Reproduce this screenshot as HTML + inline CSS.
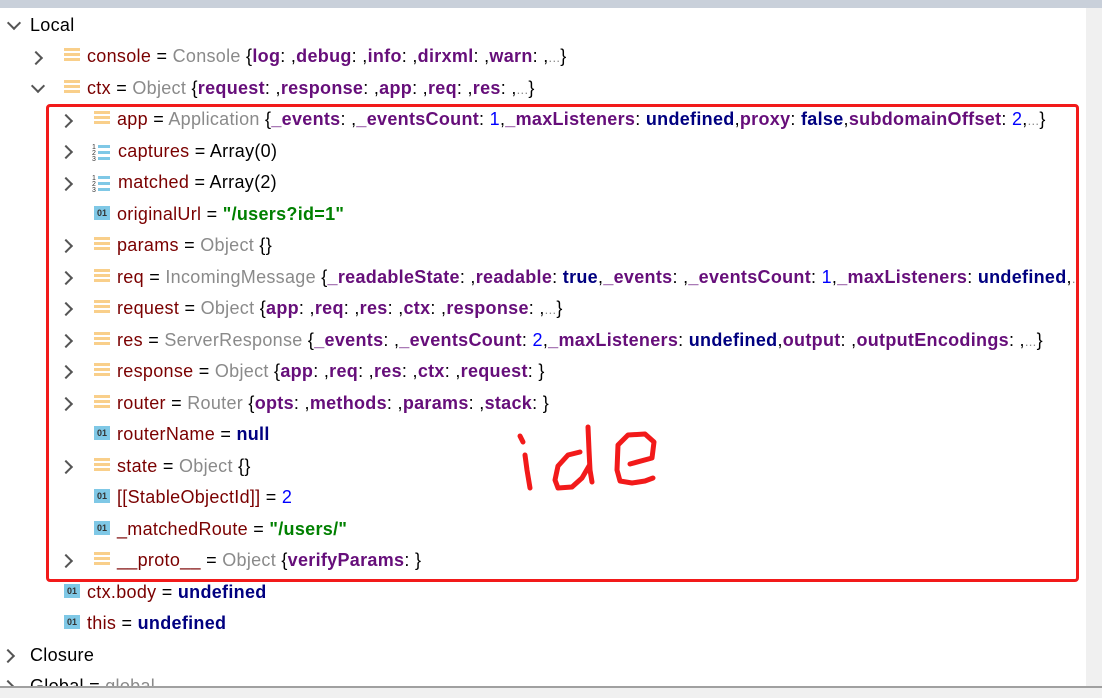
<!DOCTYPE html>
<html><head><meta charset="utf-8"><style>
html,body{margin:0;padding:0}
body{width:1102px;height:696px;overflow:hidden;background:#fff;position:relative;font-family:"Liberation Sans","Noto Sans CJK SC",sans-serif;font-size:18px;letter-spacing:0.3px}
.top{position:absolute;left:0;top:0;width:1102px;height:8px;background:#c9d0da}
.sb{position:absolute;right:0;top:8px;width:16px;height:679px;background:#f0f0f0}
.bot{position:absolute;left:0;top:686px;width:1102px;height:10px;background:#f0f0f0;border-top:2px solid #a0a0a0;z-index:5}
.r{position:absolute;height:31px;line-height:31px;white-space:nowrap;color:#000}
.ar{position:absolute;width:8px;height:8px;border-right:2.5px solid #555;border-bottom:2.5px solid #555}
.rt{transform:rotate(-45deg)}
.dn{transform:rotate(45deg)}
.n{color:#7a0000}.g{color:#8a8a8a}.k{color:#660e7a;font-weight:bold}.s{color:#008000;font-weight:bold}.b{color:#0000ff}.u{color:#000080;font-weight:bold}
.e{color:#8a8a8a;font-size:13px}
.ic{display:inline-block;vertical-align:middle;margin-right:7px;position:relative;top:-2px}
.obj{width:16px;height:15px;background:repeating-linear-gradient(#f9cf8a 0 3px,#fff 3px 5px)}
.arr{width:19px;height:19px;position:relative}
.prim{width:16px;height:14px;background:#7fc8e6;color:#333;font-size:9px;line-height:14px;text-align:center;font-weight:bold;letter-spacing:0}
.box{position:absolute;left:46px;top:104px;width:1027px;height:472px;border:3px solid #f21a1a;border-radius:4px;z-index:3}
.clip{position:absolute;left:0;top:0;width:1077px;height:696px;overflow:hidden}
</style></head><body>
<div class="top"></div>
<div class="sb"></div>
<div class="bot"></div>
<div class="box"></div>
<div class="clip">
<div class="ar dn" style="left:9px;top:18px"></div><div class="r" style="left:30px;top:10px">Local</div>

<div class="ar rt" style="left:31px;top:53px"></div><div class="r" style="left:64px;top:41px"><span class="ic obj"></span><span class="n">console</span> = <span class="g">Console</span> {<span class="k">log</span>: ,<span class="k">debug</span>: ,<span class="k">info</span>: ,<span class="k">dirxml</span>: ,<span class="k">warn</span>: ,<span class="e">...</span>}</div>

<div class="ar dn" style="left:33px;top:81px"></div><div class="r" style="left:64px;top:73px"><span class="ic obj"></span><span class="n">ctx</span> = <span class="g">Object</span> {<span class="k">request</span>: ,<span class="k">response</span>: ,<span class="k">app</span>: ,<span class="k">req</span>: ,<span class="k">res</span>: ,<span class="e">...</span>}</div>

<div class="ar rt" style="left:61px;top:116px"></div><div class="r" style="left:94px;top:104px"><span class="ic obj"></span><span class="n">app</span> = <span class="g">Application</span> {<span class="k">_events</span>: ,<span class="k">_eventsCount</span>: <span class="b">1</span>,<span class="k">_maxListeners</span>: <span class="u">undefined</span>,<span class="k">proxy</span>: <span class="u">false</span>,<span class="k">subdomainOffset</span>: <span class="b">2</span>,<span class="e">...</span>}</div>

<div class="ar rt" style="left:61px;top:147px"></div><div class="r" style="left:92px;top:136px"><span class="ic arr"><svg width="19" height="19"><text x="0" y="6" font-size="7" fill="#333">1</text><text x="0" y="12" font-size="7" fill="#333">2</text><text x="0" y="18" font-size="7" fill="#333">3</text><rect x="6" y="2" width="12" height="3" fill="#7fc8e6"/><rect x="6" y="8" width="12" height="3" fill="#7fc8e6"/><rect x="6" y="14" width="12" height="3" fill="#7fc8e6"/></svg></span><span class="n">captures</span> = Array(0)</div>

<div class="ar rt" style="left:61px;top:179px"></div><div class="r" style="left:92px;top:167px"><span class="ic arr"><svg width="19" height="19"><text x="0" y="6" font-size="7" fill="#333">1</text><text x="0" y="12" font-size="7" fill="#333">2</text><text x="0" y="18" font-size="7" fill="#333">3</text><rect x="6" y="2" width="12" height="3" fill="#7fc8e6"/><rect x="6" y="8" width="12" height="3" fill="#7fc8e6"/><rect x="6" y="14" width="12" height="3" fill="#7fc8e6"/></svg></span><span class="n">matched</span> = Array(2)</div>

<div class="r" style="left:94px;top:199px"><span class="ic prim">01</span><span class="n">originalUrl</span> = <span class="s">"/users?id=1"</span></div>

<div class="ar rt" style="left:61px;top:241px"></div><div class="r" style="left:94px;top:230px"><span class="ic obj"></span><span class="n">params</span> = <span class="g">Object</span> {}</div>

<div class="ar rt" style="left:61px;top:273px"></div><div class="r" style="left:94px;top:262px"><span class="ic obj"></span><span class="n">req</span> = <span class="g">IncomingMessage</span> {<span class="k">_readableState</span>: ,<span class="k">readable</span>: <span class="u">true</span>,<span class="k">_events</span>: ,<span class="k">_eventsCount</span>: <span class="b">1</span>,<span class="k">_maxListeners</span>: <span class="u">undefined</span>,<span class="e">...</span>}</div>

<div class="ar rt" style="left:61px;top:304px"></div><div class="r" style="left:94px;top:293px"><span class="ic obj"></span><span class="n">request</span> = <span class="g">Object</span> {<span class="k">app</span>: ,<span class="k">req</span>: ,<span class="k">res</span>: ,<span class="k">ctx</span>: ,<span class="k">response</span>: ,<span class="e">...</span>}</div>

<div class="ar rt" style="left:61px;top:336px"></div><div class="r" style="left:94px;top:325px"><span class="ic obj"></span><span class="n">res</span> = <span class="g">ServerResponse</span> {<span class="k">_events</span>: ,<span class="k">_eventsCount</span>: <span class="b">2</span>,<span class="k">_maxListeners</span>: <span class="u">undefined</span>,<span class="k">output</span>: ,<span class="k">outputEncodings</span>: ,<span class="e">...</span>}</div>

<div class="ar rt" style="left:61px;top:367px"></div><div class="r" style="left:94px;top:356px"><span class="ic obj"></span><span class="n">response</span> = <span class="g">Object</span> {<span class="k">app</span>: ,<span class="k">req</span>: ,<span class="k">res</span>: ,<span class="k">ctx</span>: ,<span class="k">request</span>: }</div>

<div class="ar rt" style="left:61px;top:399px"></div><div class="r" style="left:94px;top:388px"><span class="ic obj"></span><span class="n">router</span> = <span class="g">Router</span> {<span class="k">opts</span>: ,<span class="k">methods</span>: ,<span class="k">params</span>: ,<span class="k">stack</span>: }</div>

<div class="r" style="left:94px;top:419px"><span class="ic prim">01</span><span class="n">routerName</span> = <span class="u">null</span></div>

<div class="ar rt" style="left:61px;top:462px"></div><div class="r" style="left:94px;top:451px"><span class="ic obj"></span><span class="n">state</span> = <span class="g">Object</span> {}</div>

<div class="r" style="left:94px;top:482px"><span class="ic prim">01</span><span class="n">[[StableObjectId]]</span> = <span class="b">2</span></div>

<div class="r" style="left:94px;top:514px"><span class="ic prim">01</span><span class="n">_matchedRoute</span> = <span class="s">"/users/"</span></div>

<div class="ar rt" style="left:61px;top:556px"></div><div class="r" style="left:94px;top:545px"><span class="ic obj"></span><span class="n">__proto__</span> = <span class="g">Object</span> {<span class="k">verifyParams</span>: }</div>

<div class="r" style="left:64px;top:577px"><span class="ic prim">01</span><span class="n">ctx.body</span> = <span class="u">undefined</span></div>
<div class="r" style="left:64px;top:608px"><span class="ic prim">01</span><span class="n">this</span> = <span class="u">undefined</span></div>

<div class="ar rt" style="left:3px;top:651px"></div><div class="r" style="left:30px;top:640px">Closure</div>
<div class="ar rt" style="left:3px;top:682px"></div><div class="r" style="left:30px;top:671px">Global = <span class="g">global</span></div>
</div>
<svg style="position:absolute;left:0;top:0" width="1102" height="696"><g fill="none" stroke="#f21a1a" stroke-width="5" stroke-linecap="round" stroke-linejoin="round">
<path d="M520 436 L523 442"/>
<path d="M525 455 L527 470 L530 488"/>
<path d="M580 452 L568 455 L558 466 L555 480 L558 488 L572 487 L582 478 L589 466"/>
<path d="M588 427 L589 450 L590 470 L592 482"/>
<path d="M630 464 L652 458 L654 442 L645 434 L628 435 L618 445 L617 470 L620 481 L632 483 L645 481 L653 478"/>
</g></svg>
</body></html>
